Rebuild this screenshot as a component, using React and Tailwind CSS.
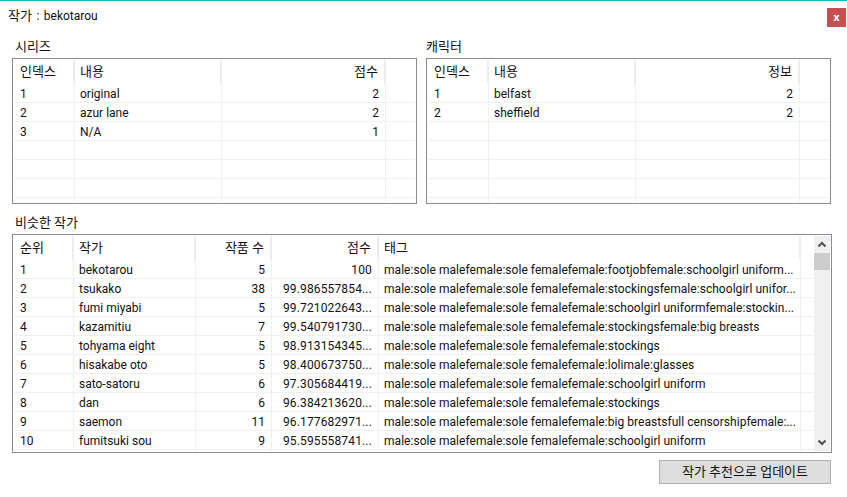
const seriesRows = [
  ["1", "original", "2"],
  ["2", "azur lane", "2"],
  ["3", "N/A", "1"],
];
const charRows = [
  ["1", "belfast", "2"],
  ["2", "sheffield", "2"],
];
const artists = [
  ["1", "bekotarou", "5", "100", "male:sole malefemale:sole femalefemale:footjobfemale:schoolgirl uniform..."],
  ["2", "tsukako", "38", "99.986557854...", "male:sole malefemale:sole femalefemale:stockingsfemale:schoolgirl unifor..."],
  ["3", "fumi miyabi", "5", "99.721022643...", "male:sole malefemale:sole femalefemale:schoolgirl uniformfemale:stockin..."],
  ["4", "kazamitiu", "7", "99.540791730...", "male:sole malefemale:sole femalefemale:stockingsfemale:big breasts"],
  ["5", "tohyama eight", "5", "98.913154345...", "male:sole malefemale:sole femalefemale:stockings"],
  ["6", "hisakabe oto", "5", "98.400673750...", "male:sole malefemale:sole femalefemale:lolimale:glasses"],
  ["7", "sato-satoru", "6", "97.305684419...", "male:sole malefemale:sole femalefemale:schoolgirl uniform"],
  ["8", "dan", "6", "96.384213620...", "male:sole malefemale:sole femalefemale:stockings"],
  ["9", "saemon", "11", "96.177682971...", "male:sole malefemale:sole femalefemale:big breastsfull censorshipfemale:..."],
  ["10", "fumitsuki sou", "9", "95.595558741...", "male:sole malefemale:sole femalefemale:schoolgirl uniform"],
];

const Cell = ({ w, right, children }) => (
  <div className={`${w} shrink-0 h-full border-r border-[#f0f0f0] pl-[5px] pr-[6px] pt-px flex items-center overflow-hidden whitespace-nowrap ${right ? "justify-end" : ""}`}>
    {children}
  </div>
);

const HeadCell = ({ w, right, children }) => (
  <div className={`${w} shrink-0 h-[24px] border-r-2 border-[#ececec] pl-[5px] pr-[6px] flex items-center whitespace-nowrap text-[13px] ${right ? "justify-end" : ""}`}>
    {children}
  </div>
);

// small list used for the two top panels
const SmallTable = ({ lastHead, rows }) => (
  <div className="w-[405px] h-[146px] border border-[#8a8a94] p-px">
    <div className="h-full overflow-hidden">
      <div className="flex h-[24px]">
        <HeadCell w="w-[61px] pl-[6px]">인덱스</HeadCell>
        <HeadCell w="w-[147px]">내용</HeadCell>
        <HeadCell w="w-[164px]" right>{lastHead}</HeadCell>
      </div>
      {[0, 1, 2, 3, 4, 5, 6].map((i) => {
        const row = rows[i];
        return (
          <div key={i} className="flex h-[19px] border-b border-[#f0f0f0]">
            <Cell w="w-[61px] pl-[6px]">{row && row[0]}</Cell>
            <Cell w="w-[147px]">{row && row[1]}</Cell>
            <Cell w="w-[164px]" right>{row && row[2]}</Cell>
          </div>
        );
      })}
    </div>
  </div>
);

const App = () => {
  return (
    <div className="w-[847px] h-[497px] bg-white border-t border-[#17b9c9] overflow-hidden text-[12px] text-[#111111] font-['Roboto','Noto_Sans_CJK_KR',sans-serif]">
      <div className="flex justify-between pl-2 pr-[1px] pt-[7px] h-[37px]">
        <div className="leading-[16px] [word-spacing:1.5px]"><span className="text-[13px]">작가</span> : bekotarou</div>
        <div className="w-[19px] h-[19px] bg-[#c75050] text-white text-[10px] font-bold flex items-center justify-center font-['DejaVu_Sans',sans-serif]">x</div>
      </div>

      <div className="flex gap-[9px] pl-3">
        <div>
          <div className="pl-[3px] h-[20px] leading-[18px] text-[13px]">시리즈</div>
          <SmallTable lastHead="점수" rows={seriesRows} />
        </div>
        <div>
          <div className="h-[20px] leading-[18px] text-[13px]">캐릭터</div>
          <SmallTable lastHead="정보" rows={charRows} />
        </div>
      </div>

      <div className="pl-3 pt-[10px]">
        <div className="pl-[3px] h-[20px] leading-[18px] text-[13px]">비슷한 작가</div>
        <div className="w-[820px] h-[219px] border border-[#8a8a94] p-px flex">
          <div className="w-[800px] shrink-0 h-full overflow-hidden">
            <div className="flex h-[24px]">
              <HeadCell w="w-[60px] pl-[6px]">순위</HeadCell>
              <HeadCell w="w-[122px]">작가</HeadCell>
              <HeadCell w="w-[76px]" right>작품 수</HeadCell>
              <HeadCell w="w-[107px]" right>점수</HeadCell>
              <HeadCell w="w-[422px]">태그</HeadCell>
            </div>
            {artists.map((a) => (
              <div key={a[0]} className="flex h-[19px] border-b border-[#f0f0f0]">
                <Cell w="w-[60px] pl-[6px]">{a[0]}</Cell>
                <Cell w="w-[122px]">{a[1]}</Cell>
                <Cell w="w-[76px]" right>{a[2]}</Cell>
                <Cell w="w-[107px]" right><span className="tracking-[0.15px]">{a[3]}</span></Cell>
                <Cell w="w-[422px]"><span className="tracking-[0.04px]">{a[4]}</span></Cell>
              </div>
            ))}
            <div className="flex h-[19px]">
              <Cell w="w-[60px]" />
              <Cell w="w-[122px]" />
              <Cell w="w-[76px]" />
              <Cell w="w-[107px]" />
              <Cell w="w-[422px]" />
            </div>
          </div>
          <div className="w-[16px] h-full bg-[#f0f0f0] flex flex-col items-center">
            <svg width="16" height="17" viewBox="0 0 16 17"><path d="M4.5 10.5 8 7 11.5 10.5" fill="none" stroke="#505050" strokeWidth="2" /></svg>
            <div className="w-[16px] h-[17px] bg-[#cdcdcd]" />
            <svg className="mt-auto" width="16" height="17" viewBox="0 0 16 17"><path d="M4.5 6.5 8 10 11.5 6.5" fill="none" stroke="#505050" strokeWidth="2" /></svg>
          </div>
        </div>
      </div>

      <div className="flex justify-end pr-4 pt-[7px]">
        <button className="w-[172px] h-[24px] bg-[#dddddd] border border-[#b0b0b0] flex items-center justify-center text-[13px]">작가 추천으로 업데이트</button>
      </div>
    </div>
  );
};

export default App;
